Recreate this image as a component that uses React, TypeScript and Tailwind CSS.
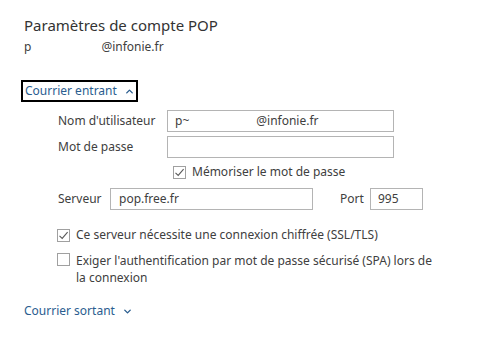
import { ChevronUp, ChevronDown } from 'lucide-react';

function Check({ checked }: { checked: boolean }) {
  return (
    <span className="flex h-[13px] w-[13px] shrink-0 items-center justify-center border border-[#a0a0a0] bg-white">
      {checked && (
        <svg width="11" height="11" viewBox="0 0 11 11" fill="none">
          <path d="M1.5 5.8 L4.2 8.4 L9.6 2.2" stroke="#5a5a5a" strokeWidth="1.1" />
        </svg>
      )}
    </span>
  );
}

export default function App() {
  return (
    <div
      className="h-[360px] w-[478px] overflow-hidden bg-white text-[12px] text-[#404040]"
      style={{ fontFamily: '"Noto Sans", "Open Sans", sans-serif' }}
    >
      <div className="pl-[24px] pt-[15px]">
        <h1 className="text-[15px] leading-[20px] text-[#333]">Paramètres de compte POP</h1>
        <div className="mt-[4px] flex leading-[16px]">
          <span>p</span>
          <span className="w-[70px]" />
          <span>@infonie.fr</span>
        </div>
      </div>

      <div className="ml-[21px] mt-[25px] flex h-[22px] w-[117px] items-center gap-[7px] border-2 border-black pl-[2px] text-[#2a5d8f]">
        <span>Courrier entrant</span>
        <ChevronUp size={11} strokeWidth={3} />
      </div>

      <div className="mt-[8px] flex flex-col">
        <div className="flex h-[22px] items-center">
          <span className="ml-[58px] w-[109px] shrink-0">Nom d'utilisateur</span>
          <div className="flex h-[22px] w-[227px] items-center border border-[#b4b4b4] pl-[7px]">
            <span>p~</span>
            <span className="w-[67px]" />
            <span>@infonie.fr</span>
          </div>
        </div>
        <div className="mt-[4px] flex h-[22px] items-center">
          <span className="ml-[58px] w-[109px] shrink-0">Mot de passe</span>
          <div className="h-[22px] w-[227px] border border-[#b4b4b4]" />
        </div>
        <div className="mt-[6px] flex h-[16px] items-center gap-[6px] pl-[173px]">
          <Check checked />
          <span>Mémoriser le mot de passe</span>
        </div>
        <div className="mt-[8px] flex h-[22px] items-center">
          <span className="ml-[58px] w-[52px] shrink-0">Serveur</span>
          <div className="flex h-[22px] w-[203px] items-center border border-[#b4b4b4] pl-[8px]">
            pop.free.fr
          </div>
          <span className="ml-[27px] w-[30px]">Port</span>
          <div className="flex h-[22px] w-[53px] items-center border border-[#b4b4b4] pl-[7px]">995</div>
        </div>
      </div>

      <div className="mt-[17px] flex flex-col pl-[57px]">
        <div className="flex h-[16px] items-center gap-[6px]">
          <Check checked />
          <span>Ce serveur nécessite une connexion chiffrée (SSL/TLS)</span>
        </div>
        <div className="mt-[9px] flex items-start gap-[6px]">
          <span className="mt-[1px]">
            <Check checked={false} />
          </span>
          <span className="leading-[17px]">
            Exiger l'authentification par mot de passe sécurisé (SPA) lors de
            <br />
            la connexion
          </span>
        </div>
      </div>

      <div className="ml-[24px] mt-[16px] flex items-center gap-[7px] text-[#2a5d8f]">
        <span>Courrier sortant</span>
        <ChevronDown size={11} strokeWidth={3} />
      </div>
    </div>
  );
}
